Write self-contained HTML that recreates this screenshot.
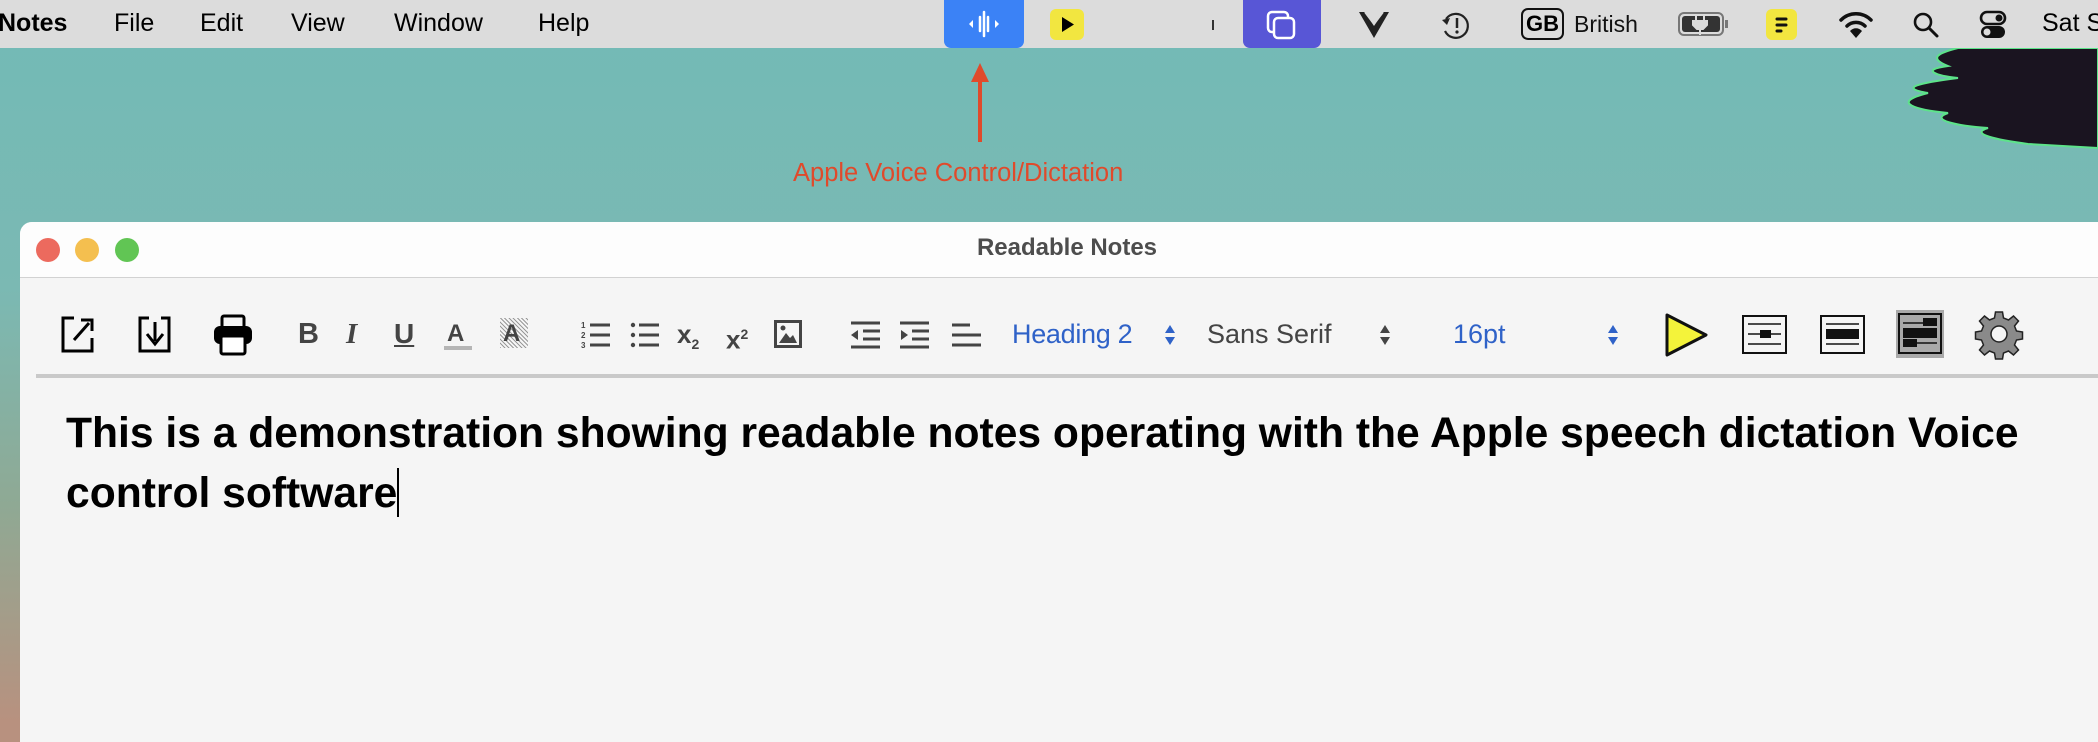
<!DOCTYPE html>
<html style="width:2098px;height:722px;background:#b8917f"><head><meta charset="utf-8"><style>
*{margin:0;padding:0;box-sizing:border-box}
body{width:2098px;height:722px;overflow:hidden;position:relative;font-family:"Liberation Sans",Arial,sans-serif;
background:linear-gradient(180deg,#72bab6 0%,#7bb9b3 40%,#8fa994 70%,#b8917f 100%);}
.a{position:absolute}
.menu{left:0;top:0;width:2098px;height:48px;background:#dcdcdc}
.mt{position:absolute;top:8px;font-size:25px;color:#000;line-height:30px;white-space:nowrap}
svg{position:absolute;overflow:visible}
.tb{position:absolute;font-size:25px;line-height:30px;top:319px;white-space:nowrap}
</style></head><body>
<div class="a" style="left:1878px;top:48px;width:220px;height:100px">
<svg width="220" height="100" viewBox="0 0 220 100"><path d="M80 0 C60 5 50 10 70 18 C40 22 60 28 80 30 C40 35 20 40 50 45 C10 55 40 62 70 65 C50 72 80 78 110 80 C90 86 120 92 150 96 L220 100 L220 0Z" fill="#1a1420" stroke="#5de38a" stroke-width="2"/></svg></div>
<div class="a menu"></div>
<div class="mt" style="left:-2px;font-weight:bold">Notes</div>
<div class="mt" style="left:114px">File</div>
<div class="mt" style="left:200px">Edit</div>
<div class="mt" style="left:291px">View</div>
<div class="mt" style="left:394px">Window</div>
<div class="mt" style="left:538px">Help</div>
<div class="a" style="left:944px;top:0;width:80px;height:48px;background:#3b82f6;border-radius:0 0 7px 7px"></div>
<svg style="left:944px;top:0" width="80" height="48"><g stroke="#fff" stroke-width="2.5" stroke-linecap="round"><line x1="36" y1="17" x2="36" y2="31"/><line x1="40" y1="12" x2="40" y2="36"/><line x1="44" y1="17" x2="44" y2="31"/></g><path d="M29 20 L29 28 L25 24Z M51 20 L51 28 L55 24Z" fill="#fff"/></svg>
<svg style="left:960px;top:60px" width="40" height="84"><line x1="20" y1="14" x2="20" y2="82" stroke="#e04a2b" stroke-width="4"/><path d="M11 22 L20 3 L29 22Z" fill="#e04a2b"/></svg>
<div class="a" style="left:793px;top:158px;font-size:25.5px;color:#e04a2b;line-height:30px;white-space:nowrap">Apple Voice Control/Dictation</div>
<div class="a" style="left:1050px;top:9px;width:34px;height:31px;background:#f2e640;border-radius:6px"></div>
<svg style="left:1050px;top:9px" width="34" height="31"><path d="M12 8 L24 15.5 L12 23Z" fill="#000"/></svg>
<div class="a" style="left:1212px;top:20px;width:2px;height:10px;background:#333"></div>
<div class="a" style="left:1243px;top:0;width:78px;height:48px;background:#5856d6;border-radius:0 0 7px 7px"></div>
<svg style="left:1243px;top:0" width="78" height="48"><rect x="25" y="12" width="20" height="20" rx="4" fill="none" stroke="#fff" stroke-width="2.5"/><rect x="31" y="18" width="20" height="20" rx="4" fill="#5856d6" stroke="#fff" stroke-width="2.5"/></svg>
<svg style="left:1357px;top:10px" width="34" height="30"><path d="M2 2 L17 28 L32 2 L26 2 L17 16 L8 2Z" fill="#222"/><path d="M8 2 L17 14 L26 2" fill="none" stroke="#dcdcdc" stroke-width="2"/></svg>
<svg style="left:1440px;top:11px" width="32" height="28"><path d="M6 8 A12 12 0 1 1 5 20" fill="none" stroke="#222" stroke-width="2.2"/><path d="M2 9 L7 14 L10 7Z" fill="#222"/><line x1="17" y1="7" x2="17" y2="17" stroke="#222" stroke-width="2.5"/><circle cx="17" cy="21" r="1.6" fill="#222"/></svg>
<div class="a" style="left:1521px;top:8px;width:43px;height:32px;border:2.5px solid #111;border-radius:7px;font-size:22px;font-weight:bold;text-align:center;line-height:27px">GB</div>
<div class="a" style="left:1574px;top:9px;font-size:23px;line-height:30px;color:#111">British</div>
<svg style="left:1678px;top:11px" width="52" height="26"><rect x="1" y="2" width="44" height="22" rx="5" fill="none" stroke="#777" stroke-width="2"/><rect x="4" y="5" width="38" height="16" rx="3" fill="#333"/><rect x="47" y="9" width="3" height="8" fill="#777"/><path d="M18 4 v6 M26 4 v6 M15 10 h14 v4 l-4 4 h-6 l-4 -4z M22 18 v6" stroke="#dcdcdc" stroke-width="2" fill="#dcdcdc"/></svg>
<div class="a" style="left:1766px;top:9px;width:31px;height:31px;background:#f2e640;border-radius:6px"></div>
<svg style="left:1766px;top:9px" width="31" height="31"><g stroke="#111" stroke-width="3" stroke-linecap="round"><line x1="11" y1="10" x2="20" y2="10"/><line x1="11" y1="16" x2="20" y2="16"/><line x1="11" y1="22" x2="15" y2="22"/></g></svg>
<svg style="left:1838px;top:10px" width="36" height="30"><g fill="none" stroke="#111" stroke-width="3.5" stroke-linecap="round"><path d="M3 10 A21 21 0 0 1 33 10"/><path d="M9 16 A13 13 0 0 1 27 16"/></g><path d="M12 21 A8 8 0 0 1 24 21 L18 28Z" fill="#111"/></svg>
<svg style="left:1912px;top:11px" width="30" height="28"><circle cx="11" cy="11" r="8" fill="none" stroke="#111" stroke-width="2.6"/><line x1="17" y1="17" x2="25" y2="25" stroke="#111" stroke-width="3" stroke-linecap="round"/></svg>
<svg style="left:1979px;top:10px" width="28" height="30"><rect x="2" y="2" width="24" height="12" rx="6" fill="none" stroke="#111" stroke-width="2.6"/><circle cx="20" cy="8" r="3.5" fill="#111"/><rect x="2" y="16" width="24" height="12" rx="6" fill="#111"/><circle cx="8" cy="22" r="3.5" fill="#dcdcdc"/></svg>
<div class="mt" style="left:2042px">Sat S</div>

<div class="a" style="left:20px;top:222px;width:2100px;height:520px;background:#f5f5f5;border-radius:12px 0 0 0;overflow:hidden">
<div class="a" style="left:0;top:0;width:2100px;height:56px;background:#fdfdfd;border-bottom:1px solid #d2d2d2"></div>
</div>
<div class="a" style="left:36px;top:238px;width:24px;height:24px;border-radius:50%;background:#ec6a5e"></div>
<div class="a" style="left:75px;top:238px;width:24px;height:24px;border-radius:50%;background:#f4bf4f"></div>
<div class="a" style="left:115px;top:238px;width:24px;height:24px;border-radius:50%;background:#61c554"></div>
<div class="a" style="left:0;width:2098px;text-align:center;top:234px;font-size:24px;font-weight:bold;color:#4d4d4d;padding-left:36px">Readable Notes</div>

<svg style="left:60px;top:316px" width="36" height="38"><path d="M14 2 H3 V35 H32 V22" fill="none" stroke="#000" stroke-width="3"/><path d="M14 24 L29 7" stroke="#000" stroke-width="3"/><path d="M21 4 H32 V15" fill="none" stroke="#000" stroke-width="3"/></svg>
<svg style="left:137px;top:316px" width="36" height="38"><path d="M12 2 H3 V35 H32 V2 H24" fill="none" stroke="#000" stroke-width="3"/><line x1="18" y1="6" x2="18" y2="25" stroke="#000" stroke-width="3"/><path d="M10 18 L18 28 L26 18" fill="none" stroke="#000" stroke-width="3"/></svg>
<svg style="left:213px;top:314px" width="40" height="42"><rect x="9" y="2" width="22" height="12" rx="2" fill="none" stroke="#000" stroke-width="3"/><rect x="1" y="12" width="38" height="18" rx="6" fill="#000"/><rect x="8" y="22" width="24" height="18" rx="2" fill="#fff" stroke="#000" stroke-width="3"/></svg>
<div class="tb" style="left:298px;font-weight:bold;color:#444;font-size:29px">B</div>
<div class="tb" style="left:346px;font-weight:bold;font-style:italic;color:#444;font-family:'Liberation Serif',serif;font-size:29px">I</div>
<div class="tb" style="left:394px;font-weight:bold;color:#444;font-size:28px;text-decoration:underline">U</div>
<div class="tb" style="left:447px;font-weight:bold;color:#444;font-size:24px">A</div>
<div class="a" style="left:444px;top:346px;width:28px;height:4px;background:#b5b5b5"></div>
<div class="a" style="left:500px;top:318px;width:28px;height:30px;background:repeating-linear-gradient(45deg,#999 0 1px,#f5f5f5 1px 3px)"></div>
<div class="tb" style="left:503px;font-weight:bold;color:#444;font-size:24px">A</div>
<svg style="left:581px;top:320px" width="30" height="30"><text x="0" y="8" font-size="8" font-weight="bold" fill="#444">1</text><text x="0" y="18" font-size="8" font-weight="bold" fill="#444">2</text><text x="0" y="28" font-size="8" font-weight="bold" fill="#444">3</text><g stroke="#444" stroke-width="3"><line x1="9" y1="5" x2="29" y2="5"/><line x1="9" y1="15" x2="29" y2="15"/><line x1="9" y1="25" x2="29" y2="25"/></g></svg>
<svg style="left:630px;top:320px" width="30" height="30"><g fill="#444"><circle cx="3" cy="5" r="2.2"/><circle cx="3" cy="15" r="2.2"/><circle cx="3" cy="25" r="2.2"/></g><g stroke="#444" stroke-width="3"><line x1="9" y1="5" x2="29" y2="5"/><line x1="9" y1="15" x2="29" y2="15"/><line x1="9" y1="25" x2="29" y2="25"/></g></svg>
<div class="tb" style="left:677px;font-weight:bold;color:#444;font-size:26px">x<sub style="font-size:14px">2</sub></div>
<div class="tb" style="left:726px;font-weight:bold;color:#444;font-size:26px">x<sup style="font-size:14px">2</sup></div>
<svg style="left:774px;top:320px" width="28" height="28"><rect x="1.5" y="1.5" width="25" height="25" fill="none" stroke="#444" stroke-width="3"/><path d="M5 23 L12 13 L16 18 L19 15 L23 23Z" fill="#444"/><circle cx="9" cy="8" r="2.5" fill="#444"/></svg>
<svg style="left:851px;top:320px" width="30" height="30"><g stroke="#444" stroke-width="3"><line x1="0" y1="3" x2="29" y2="3"/><line x1="12" y1="11" x2="29" y2="11"/><line x1="12" y1="19" x2="29" y2="19"/><line x1="0" y1="27" x2="29" y2="27"/></g><path d="M0 15 L7 10 V20Z" fill="#444"/></svg>
<svg style="left:900px;top:320px" width="30" height="30"><g stroke="#444" stroke-width="3"><line x1="0" y1="3" x2="29" y2="3"/><line x1="12" y1="11" x2="29" y2="11"/><line x1="12" y1="19" x2="29" y2="19"/><line x1="0" y1="27" x2="29" y2="27"/></g><path d="M8 15 L1 10 V20Z" fill="#444"/></svg>
<svg style="left:952px;top:320px" width="30" height="30"><g stroke="#444" stroke-width="3"><line x1="0" y1="5" x2="18" y2="5"/><line x1="0" y1="15" x2="29" y2="15"/><line x1="0" y1="25" x2="29" y2="25"/></g></svg>
<div class="tb" style="left:1012px;color:#2f62c8;font-size:27px;letter-spacing:-0.3px">Heading 2</div>
<div class="tb" style="left:1207px;color:#444;font-size:27px">Sans Serif</div>
<div class="tb" style="left:1453px;color:#2f62c8;font-size:27px">16pt</div>
<svg style="left:1163px;top:324px" width="14" height="22"><path d="M7 1 L12 9 H2Z M7 21 L12 13 H2Z" fill="#2f62c8"/></svg>
<svg style="left:1378px;top:324px" width="14" height="22"><path d="M7 1 L12 9 H2Z M7 21 L12 13 H2Z" fill="#444"/></svg>
<svg style="left:1606px;top:324px" width="14" height="22"><path d="M7 1 L12 9 H2Z M7 21 L12 13 H2Z" fill="#2f62c8"/></svg>
<svg style="left:1664px;top:312px" width="46" height="46"><path d="M3 3 L42 23 L3 43Z" fill="#f4f33a" stroke="#111" stroke-width="3" stroke-linejoin="round"/></svg>
<svg style="left:1742px;top:315px" width="46" height="40"><rect x="1" y="1" width="43" height="37" fill="#f5f5f5" stroke="#111" stroke-width="2"/><g stroke="#111" stroke-width="1.5"><line x1="6" y1="9" x2="39" y2="9"/><line x1="6" y1="19" x2="39" y2="19"/><line x1="6" y1="29" x2="39" y2="29"/></g><rect x="18" y="15" width="11" height="8" fill="#111"/></svg>
<svg style="left:1820px;top:315px" width="46" height="40"><rect x="1" y="1" width="43" height="37" fill="#f5f5f5" stroke="#111" stroke-width="2"/><g stroke="#111" stroke-width="1.5"><line x1="6" y1="9" x2="39" y2="9"/><line x1="6" y1="29" x2="39" y2="29"/></g><rect x="6" y="14" width="33" height="10" fill="#111"/></svg>
<div class="a" style="left:1896px;top:310px;width:48px;height:48px;background:#a9a9a9"></div>
<svg style="left:1898px;top:313px" width="46" height="42"><rect x="1" y="1" width="42" height="39" fill="none" stroke="#111" stroke-width="2"/><g stroke="#111" stroke-width="1.5"><line x1="5" y1="10" x2="39" y2="10"/><line x1="5" y1="30" x2="39" y2="30"/></g><rect x="25" y="5" width="14" height="8" fill="#111"/><rect x="5" y="15" width="34" height="10" fill="#111"/><rect x="5" y="26" width="14" height="8" fill="#111"/></svg>
<svg style="left:1975px;top:310px" width="48" height="48" viewBox="-24 -24 48 48"><g fill="#8a8a8a" stroke="#222" stroke-width="1.5"><path d="M-3.5 -22 h7 l1 6 l5 2 l5 -4 l5 5 l-4 5 l2 5 l6 1 v7 l-6 1 l-2 5 l4 5 l-5 5 l-5 -4 l-5 2 l-1 6 h-7 l-1 -6 l-5 -2 l-5 4 l-5 -5 l4 -5 l-2 -5 l-6 -1 v-7 l6 -1 l2 -5 l-4 -5 l5 -5 l5 4 l5 -2z"/></g><circle r="8" fill="#f5f5f5" stroke="#222" stroke-width="1.5"/></svg>
<div class="a" style="left:36px;top:374px;width:2070px;height:4px;background:#c9c9c9"></div>

<div class="a" style="left:66px;top:403px;font-size:42.6px;font-weight:bold;line-height:60px;color:#000;width:2060px;white-space:nowrap">This is a demonstration showing readable notes operating with the Apple speech dictation Voice<br>control software<span style="display:inline-block;width:2px;height:49px;background:#000;vertical-align:-10px"></span></div>
</body></html>
